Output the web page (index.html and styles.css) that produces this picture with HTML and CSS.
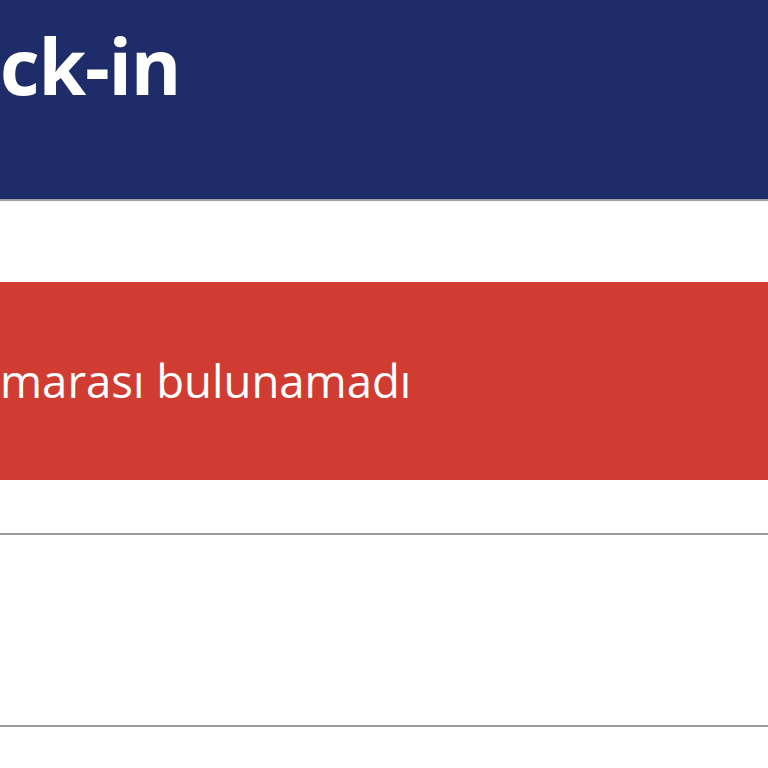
FILE: index.html
```html
<!DOCTYPE html>
<html lang="tr">
<head>
<meta charset="utf-8">
<link rel="stylesheet" href="styles.css">
</head>
<body>
<header class="topbar">
  <h1 class="title">ck-in</h1>
</header>
<div class="spacer-top"></div>
<div class="alert">
  <p class="alert-text">marası bulunamadı</p>
</div>
<div class="spacer-mid"></div>
<div class="row"></div>
</body>
</html>
```
FILE: styles.css
```css
html, body {
  margin: 0;
  padding: 0;
  background: #ffffff;
  overflow: hidden;
  font-family: "Open Sans", "Noto Sans", sans-serif;
}
.topbar {
  height: 199px;
  background: #1f2c6a;
  border-bottom: 2px solid #9aa0a6;
  box-sizing: content-box;
}
.title {
  margin: 0;
  padding-top: 27px;
  font-size: 77px;
  line-height: 1;
  font-weight: 700;
  color: #ffffff;
  letter-spacing: -1.2px;
}
.spacer-top {
  height: 81px;
}
.alert {
  height: 198px;
  background: #d03b32;
  display: flex;
  align-items: center;
}
.alert-text {
  margin: 0;
  font-size: 45.5px;
  line-height: 1;
  color: #ffffff;
}
.spacer-mid {
  height: 53px;
  border-bottom: 2px solid #9a9a9a;
}
.row {
  height: 190px;
  border-bottom: 2px solid #9a9a9a;
}
```
